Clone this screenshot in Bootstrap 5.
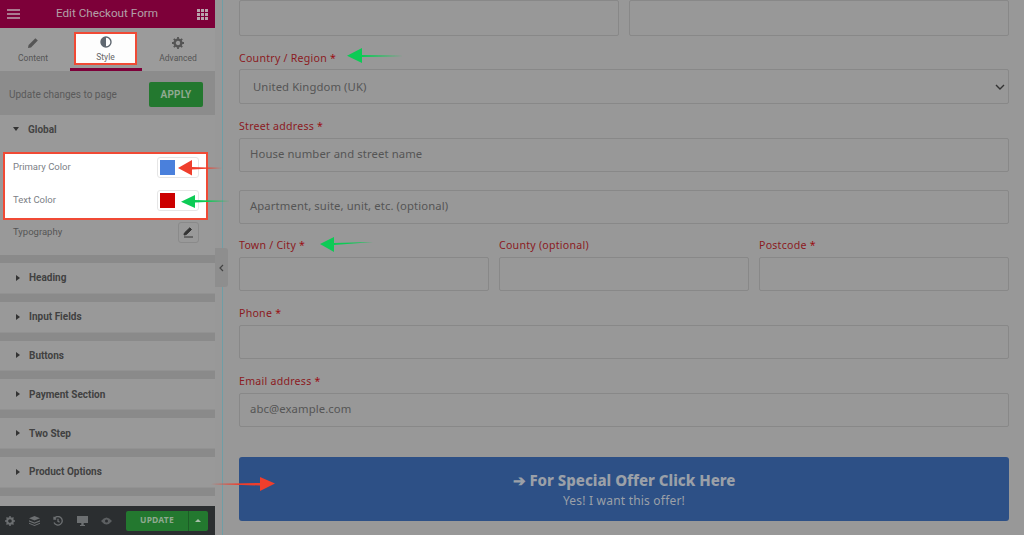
<!DOCTYPE html>
<html lang="en">
<head>
<meta charset="utf-8">
<title>Edit Checkout Form</title>
<link href="https://cdn.jsdelivr.net/npm/bootstrap@5.3.0/dist/css/bootstrap.min.css" rel="stylesheet">
<style>
html,body{height:535px;overflow:hidden}
body{background:#989898;font-family:"Noto Sans",sans-serif;position:relative}
.side{width:215px;height:535px;background:#999;font-family:Roboto,sans-serif;flex:none}
.topbar{height:28px;background:#7d0039;color:#b2a0a8;font-size:11.7px;padding:0 7px}
.topbar span{margin-right:3px}
.tabsbar{height:43px;background:#9b9b9b}
.tabitem{width:72px;font-size:8.5px;color:#555;padding-top:9px;height:43px}
.tabfirst{width:66px;margin-right:4px}
.tabitem svg{display:block;margin:0 auto 3px}
.tabon{border-bottom:3px solid #7d0039;color:#666;position:relative}
.tabhi{position:absolute;left:4px;right:5px;top:4px;height:33px;background:#fdfdfd;border:2px solid #f04a35;padding-top:2px;text-align:center}
.applybar{height:44px;background:#8c8c8c;padding:2px 12px 0 9px;font-size:10px;color:#5a5a5a}
.applybtn{width:54px;height:25px;background:#23782f;color:#8fa990;font-size:10px;font-weight:700;border-radius:2px;letter-spacing:.2px}
.grouphead{height:28px;padding-left:13px;font-size:10px;font-weight:700;color:#444;background:#999}
.caret-d{width:0;height:0;border:3px solid transparent;border-top:4px solid #333;border-bottom:0;margin-right:9px}
.caret-r{width:0;height:0;border:3px solid transparent;border-left:4px solid #333;border-right:0;margin-right:9px;margin-left:3px}
.colorbox{position:absolute;left:3px;top:152px;width:205px;height:68px;background:#fff;border:2px solid #f04a35;z-index:2;font-size:9.5px;color:#7c8086;font-family:Roboto,sans-serif;display:flex;flex-direction:column;gap:7px}
.colorline{height:26px;padding:0 7px 0 8px}
.swatchwrap{width:42px;height:21px;border:1px solid #e6e6e6;border-radius:3px;padding:2px}
.swatchfill{width:15px;height:15px}
.typoline{height:36px;margin:71px 0 5px;padding:0 16px 0 13px;font-size:9.5px;color:#555}
.editbtn{width:21px;height:21px;border:1px solid #8a8a8a;border-radius:3px}
.sband{height:8px;background:#8a8a8a}
.srow{height:30.8px;background:#999;padding-left:13px;font-size:10px;font-weight:700;color:#414141;border-bottom:1px solid #929292}
.sfoot{position:absolute;left:0;top:506px;width:215px;height:29px;background:#2b2e30;padding:0 7px 0 5px}
.updatebtn{width:62px;height:20px;background:#23782f;color:#8fa990;font-size:8.5px;font-weight:700;border-radius:2px 0 0 2px;letter-spacing:.2px}
.updatemore{width:20px;height:20px;background:#23782f;border-left:1px solid #1c5d26;border-radius:0 2px 2px 0}
.handle{position:absolute;left:215px;top:248px;width:13px;height:39px;background:#8e8e8e;border-radius:0 3px 3px 0;z-index:3;color:#444}
.vline{position:absolute;left:222px;top:0;width:1px;height:535px;background:#6f9ea6}
.mainarea{position:absolute;left:239px;top:0;width:770px;font-size:10.5px}
.topfields{gap:10px}
.tricols{margin:15px -5px 0}
.tricol{padding:0 5px}
.flabel{display:block;color:#8b1a22;font-size:10.6px;letter-spacing:.25px;line-height:13px;margin:0 0 5px}
.flabel span{color:#9b0d12}
.fbox{height:34px;border:1px solid #888;border-radius:2px;background:#989898;font-size:11.3px;color:#555;padding:0 10px 2px;letter-spacing:.1px}
.offerbtn{height:64px;margin-top:30px;background:#2d5086;border-radius:3px;color:#9ba0a8;text-align:center}
.offer1{font-size:15px;font-weight:800;line-height:20px}
.offer2{font-size:12px;line-height:17px;margin-top:2px;letter-spacing:.2px}
.annot{position:absolute;z-index:4;left:0;top:0;pointer-events:none}
</style>
</head>
<body>
<aside class="side d-flex flex-column">
  <div class="topbar d-flex align-items-center justify-content-between">
    <svg width="13" height="10" viewBox="0 0 13 10"><path d="M0 1h13M0 5h13M0 9h13" stroke="#b9a4ad" stroke-width="1.7"/></svg>
    <span>Edit Checkout Form</span>
    <svg width="11" height="11" viewBox="0 0 11 11" fill="#b9a4ad"><rect width="3" height="3"/><rect x="4" width="3" height="3"/><rect x="8" width="3" height="3"/><rect y="4" width="3" height="3"/><rect x="4" y="4" width="3" height="3"/><rect x="8" y="4" width="3" height="3"/><rect y="8" width="3" height="3"/><rect x="4" y="8" width="3" height="3"/><rect x="8" y="8" width="3" height="3"/></svg>
  </div>
  <div class="tabsbar d-flex">
    <div class="tabitem tabfirst text-center"><svg width="12" height="12" viewBox="0 0 12 12"><path d="M1 11l.6-3L8.400 1.200l2.400 2.400L4 10.400z" fill="#555"/></svg>Content</div>
    <div class="tabitem tabon"><div class="tabhi"><svg width="12" height="12" viewBox="0 0 12 12"><circle cx="6" cy="6" r="5" fill="none" stroke="#5f6770" stroke-width="1.400"/><path d="M6 1a5 5 0 0 1 0 10z" fill="#5f6770" transform="rotate(180 6 6)"/></svg>Style</div></div>
    <div class="tabitem text-center"><svg width="12" height="12" viewBox="0 0 12 12"><circle cx="6" cy="6" r="3.400" fill="none" stroke="#555" stroke-width="2.400"/><path d="M6 0v2.500M6 9.500V12M0 6h2.500M9.500 6H12M1.800 1.800l1.800 1.800M8.400 8.400l1.800 1.800M1.800 10.200l1.800-1.800M8.400 3.600l1.800-1.800" stroke="#555" stroke-width="1.800"/></svg>Advanced</div>
  </div>
  <div class="applybar d-flex align-items-center justify-content-between"><span>Update changes to page</span><div class="applybtn d-flex align-items-center justify-content-center">APPLY</div></div>
  <div class="grouphead d-flex align-items-center"><i class="caret-d"></i>Global</div>
  <div class="typoline d-flex align-items-center justify-content-between"><span>Typography</span>
    <div class="editbtn d-flex align-items-center justify-content-center"><svg width="11" height="11" viewBox="0 0 11 11"><path d="M1 8l.4-2L6.800.8l1.700 1.700L3.200 7.600zM1 10h9" fill="#333" stroke="#333"/></svg></div></div>
  <div class="sband"></div>
  <div class="srow d-flex align-items-center"><i class="caret-r"></i>Heading</div><div class="sband"></div>
  <div class="srow d-flex align-items-center"><i class="caret-r"></i>Input Fields</div><div class="sband"></div>
  <div class="srow d-flex align-items-center"><i class="caret-r"></i>Buttons</div><div class="sband"></div>
  <div class="srow d-flex align-items-center"><i class="caret-r"></i>Payment Section</div><div class="sband"></div>
  <div class="srow d-flex align-items-center"><i class="caret-r"></i>Two Step</div><div class="sband"></div>
  <div class="srow d-flex align-items-center"><i class="caret-r"></i>Product Options</div><div class="sband"></div>
</aside>

<div class="colorbox">
  <div class="colorline d-flex align-items-center justify-content-between"><span>Primary Color</span><div class="swatchwrap"><div class="swatchfill" style="background:#4a80dc"></div></div></div>
  <div class="colorline d-flex align-items-center justify-content-between"><span>Text Color</span><div class="swatchwrap"><div class="swatchfill" style="background:#cc0000"></div></div></div>
</div>

<div class="sfoot d-flex align-items-center justify-content-between">
  <svg width="10" height="10" viewBox="0 0 12 12"><circle cx="6" cy="6" r="3.400" fill="none" stroke="#6c6f71" stroke-width="2.400"/><path d="M6 0v2.500M6 9.500V12M0 6h2.500M9.500 6H12M1.800 1.800l1.800 1.800M8.400 8.400l1.800 1.800M1.800 10.200l1.800-1.800M8.400 3.600l1.800-1.800" stroke="#6c6f71" stroke-width="1.800"/></svg>
  <svg width="11" height="10" viewBox="0 0 11 10" fill="#6c6f71"><path d="M5.500 0L11 2.300 5.500 4.600 0 2.300zM0 4.300l5.500 2.300L11 4.300v1.200L5.500 7.800 0 5.500zM0 6.700L5.500 9 11 6.700v1L5.500 10 0 7.700z"/></svg>
  <svg width="10" height="10" viewBox="0 0 10 10" fill="none" stroke="#6c6f71" stroke-width="1.300"><path d="M1.300 2.500A4.300 4.300 0 1 1 1 6.500M1 .8v2.200h2.200M5 2.800V5.300l1.600 1"/></svg>
  <svg width="11" height="10" viewBox="0 0 11 10" fill="#6c6f71"><path d="M0 0h11v7H0zM4.300 7h2.400v2H8v1H3V9h1.300z"/></svg>
  <svg width="11" height="8" viewBox="0 0 11 8"><path d="M0 4Q5.500-3 11 4 5.500 11 0 4z" fill="#5c5f61"/><circle cx="5.500" cy="4" r="1.500" fill="#2b2e30"/></svg>
  <div class="d-flex"><div class="updatebtn d-flex align-items-center justify-content-center">UPDATE</div><div class="updatemore d-flex align-items-center justify-content-center"><i style="width:0;height:0;border:3px solid transparent;border-bottom:3px solid #a8bfaa;border-top:0"></i></div></div>
</div>

<div class="handle d-flex align-items-center justify-content-center"><svg width="5" height="8" viewBox="0 0 5 8"><path d="M4 1L1 4l3 3" fill="none" stroke="#444" stroke-width="1.200"/></svg></div>
<div class="vline"></div>

<main class="mainarea">
  <div class="d-flex topfields"><div class="fbox flex-fill" style="height:36px"></div><div class="fbox flex-fill" style="height:36px"></div></div>
  <label class="flabel" style="margin-top:16px;margin-bottom:4px">Country / Region <span>*</span></label>
  <div class="fbox d-flex align-items-center justify-content-between" style="padding:1px 3px 0 13px;height:35px"><span>United Kingdom (UK)</span><svg width="10" height="6" viewBox="0 0 10 6"><path d="M1 1l4 4 4-4" fill="none" stroke="#333" stroke-width="1.400"/></svg></div>
  <label class="flabel" style="margin-top:16px">Street address <span>*</span></label>
  <div class="fbox d-flex align-items-center">House number and street name</div>
  <div class="fbox d-flex align-items-center" style="margin-top:18px">Apartment, suite, unit, etc. (optional)</div>
  <div class="row g-0 tricols">
    <div class="col-4 tricol"><label class="flabel">Town / City <span>*</span></label><div class="fbox"></div></div>
    <div class="col-4 tricol"><label class="flabel">County (optional)</label><div class="fbox"></div></div>
    <div class="col-4 tricol"><label class="flabel">Postcode <span>*</span></label><div class="fbox"></div></div>
  </div>
  <label class="flabel" style="margin-top:16px">Phone <span>*</span></label>
  <div class="fbox"></div>
  <label class="flabel" style="margin-top:16px">Email address <span>*</span></label>
  <div class="fbox d-flex align-items-center">abc@example.com</div>
  <div class="offerbtn d-flex flex-column align-items-center justify-content-center">
    <div class="offer1">➔ For Special Offer Click Here</div>
    <div class="offer2">Yes! I want this offer!</div>
  </div>
</main>

<svg class="annot" width="1024" height="535" viewBox="0 0 1024 535">
  <path d="M222 168L192 167V160L178 168 192 175.500V169.500z" fill="#ef3e2c"/>
  <path d="M230 201L195 200V195L181 201.700 195 208V202.500z" fill="#0ccb55"/>
  <path d="M403 56L362 55V48L347 55.700 362 63V57z" fill="#0ccb55"/>
  <path d="M373 242L334 243V237L320 244 334 252V245z" fill="#0ccb55"/>
  <path d="M211 484L260 483V477L275 483.500 260 491V485.500z" fill="#ef3e2c"/>
</svg>
</body>
</html>
